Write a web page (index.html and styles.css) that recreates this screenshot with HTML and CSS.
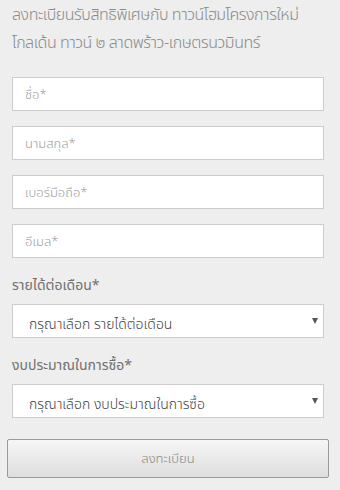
FILE: index.html
```html
<!DOCTYPE html>
<html lang="th">
<head>
    <meta charset="UTF-8">
    <meta name="viewport" content="width=device-width, initial-scale=1.0">
    <title>ลงทะเบียน</title>
    <link rel="stylesheet" href="styles.css">
</head>
<body>

<div class="register">
    <h2 class="register-title">ลงทะเบียนรับสิทธิพิเศษกับ ทาวน์โฮมโครงการใหม่<br>โกลเด้น ทาวน์ ๒ ลาดพร้าว-เกษตรนวมินทร์</h2>

    <form class="register-form">
        <input type="text" class="field" placeholder="ชื่อ*">
        <input type="text" class="field" placeholder="นามสกุล*">
        <input type="tel" class="field" placeholder="เบอร์มือถือ*">
        <input type="email" class="field" placeholder="อีเมล*">

        <label class="field-label">รายได้ต่อเดือน*</label>
        <div class="select-wrap">
            <select class="field select">
                <option>กรุณาเลือก รายได้ต่อเดือน</option>
            </select>
        </div>

        <label class="field-label">งบประมาณในการซื้อ*</label>
        <div class="select-wrap">
            <select class="field select">
                <option>กรุณาเลือก งบประมาณในการซื้อ</option>
            </select>
        </div>

        <button type="button" class="submit-btn">ลงทะเบียน</button>
    </form>
</div>

</body>
</html>
```

FILE: styles.css
```css
body {
    margin: 0;
    background-color: #eeeeee;
    font-family: "Noto Sans", "Noto Sans Thai", sans-serif;
}

.register {
    padding: 0 16px 0 12px;
}

.register-title {
    margin: 0 0 21px;
    font-size: 16px;
    font-weight: 300;
    line-height: 28px;
    letter-spacing: -0.45px;
    white-space: nowrap;
    color: #8a8a8a;
}

.register-form {
    display: flex;
    flex-direction: column;
}

.field {
    box-sizing: border-box;
    height: 34px;
    width: 100%;
    margin: 0 0 15px;
    padding: 0 12px;
    border: 1px solid #cccccc;
    border-radius: 0;
    background-color: #ffffff;
    font-family: inherit;
    font-size: 13px;
    font-weight: 300;
    color: #333;
    outline: none;
}

.field::placeholder {
    color: #a0a0a0;
}

.field-label {
    margin: 2px 0 9px;
    font-size: 14px;
    line-height: 20px;
    font-weight: 400;
    color: #707070;
}

.select-wrap {
    position: relative;
}

.select {
    appearance: none;
    -webkit-appearance: none;
    margin-bottom: 15px;
    padding: 4px 16px 0;
    font-size: 14px;
    color: #444;
}

.select-wrap::after {
    content: "";
    position: absolute;
    right: 6px;
    top: 14px;
    border-left: 3px solid transparent;
    border-right: 3px solid transparent;
    border-top: 6px solid #555;
}

.submit-btn {
    height: 39px;
    margin: 6px -5px 0;
    border: 1px solid #9a9a9a;
    border-radius: 2px;
    background: linear-gradient(#f6f6f6, #dedede);
    font-family: inherit;
    font-size: 13px;
    font-weight: 300;
    color: #888;
    cursor: pointer;
}
```
